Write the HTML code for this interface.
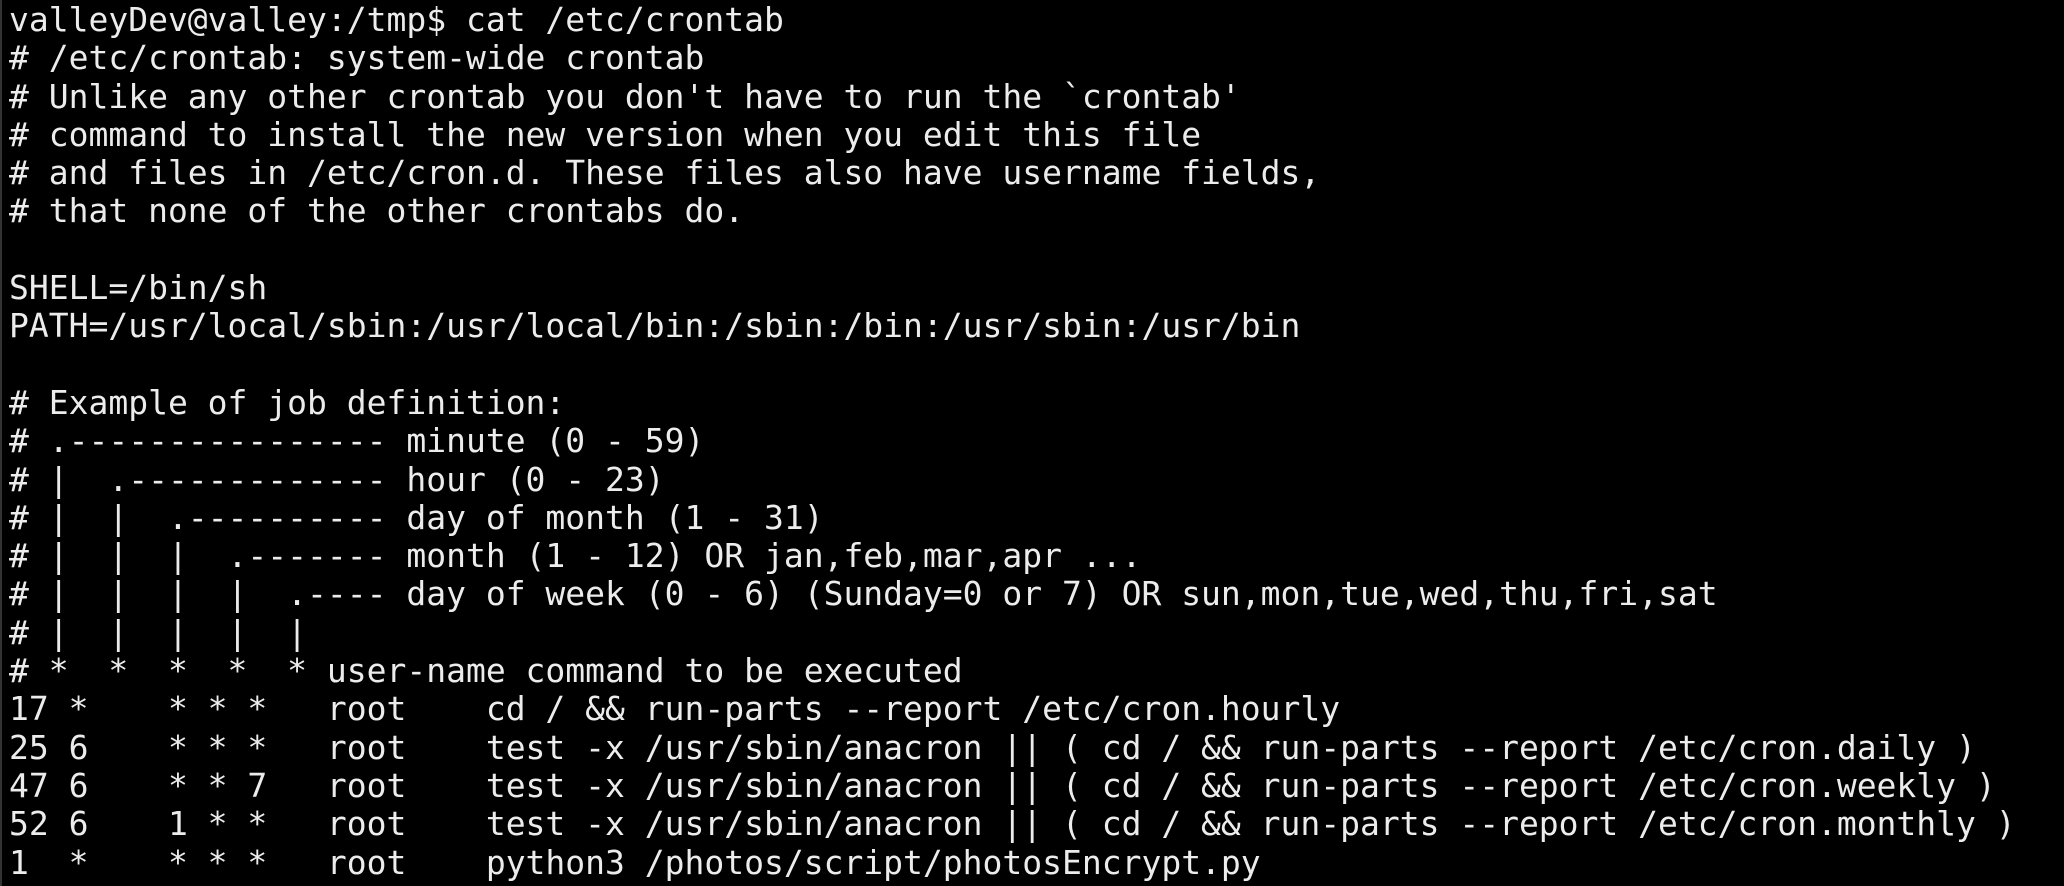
<!DOCTYPE html>
<html><head><meta charset="utf-8"><style>
html,body{margin:0;padding:0;background:#000;width:2064px;height:886px;overflow:hidden}
pre{margin:0;padding:1px 0 0 7px;font-family:"DejaVu Sans Mono","Liberation Mono",monospace;font-size:33px;line-height:38.3px;color:#ececec;white-space:pre}
body{border-left:2px solid #333;box-sizing:border-box}
</style></head><body><pre>valleyDev@valley:/tmp$ cat /etc/crontab
# /etc/crontab: system-wide crontab
# Unlike any other crontab you don't have to run the `crontab'
# command to install the new version when you edit this file
# and files in /etc/cron.d. These files also have username fields,
# that none of the other crontabs do.

SHELL=/bin/sh
PATH=/usr/local/sbin:/usr/local/bin:/sbin:/bin:/usr/sbin:/usr/bin

# Example of job definition:
# .---------------- minute (0 - 59)
# |  .------------- hour (0 - 23)
# |  |  .---------- day of month (1 - 31)
# |  |  |  .------- month (1 - 12) OR jan,feb,mar,apr ...
# |  |  |  |  .---- day of week (0 - 6) (Sunday=0 or 7) OR sun,mon,tue,wed,thu,fri,sat
# |  |  |  |  |
# *  *  *  *  * user-name command to be executed
17 *    * * *   root    cd / &amp;&amp; run-parts --report /etc/cron.hourly
25 6    * * *   root    test -x /usr/sbin/anacron || ( cd / &amp;&amp; run-parts --report /etc/cron.daily )
47 6    * * 7   root    test -x /usr/sbin/anacron || ( cd / &amp;&amp; run-parts --report /etc/cron.weekly )
52 6    1 * *   root    test -x /usr/sbin/anacron || ( cd / &amp;&amp; run-parts --report /etc/cron.monthly )
1  *    * * *   root    python3 /photos/script/photosEncrypt.py</pre></body></html>
